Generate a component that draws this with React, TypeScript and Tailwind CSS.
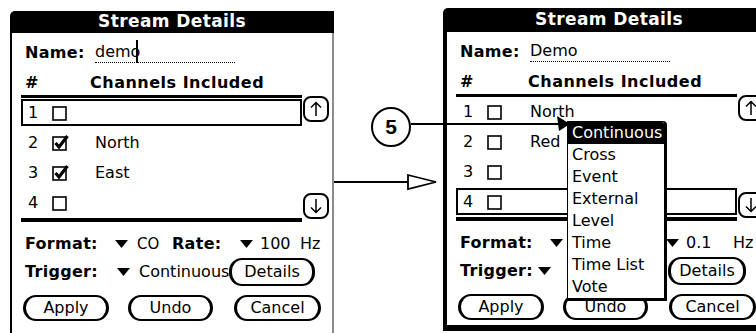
import React from 'react';

const FONT = "font-['DejaVu_Sans',sans-serif]";

type Row = { n: number; checked?: boolean; label?: string };

interface ScreenProps {
  variant: 'left' | 'right';
  name: string;
  rows: Row[];
  selected: number;
  format: string;
  rateLabel: string;
  rate: string;
  trigger: string;
  children?: React.ReactNode;
}

const Tri = () => (
  <svg width="13" height="8" viewBox="0 0 13 8" className="shrink-0">
    <path d="M0 0H13L6.5 8Z" fill="#000" />
  </svg>
);

const CheckBox = ({ checked }: { checked?: boolean }) => (
  <svg width="18" height="18" viewBox="0 0 18 18" className="shrink-0">
    <rect x="1" y="3" width="13" height="13" fill="#fff" stroke="#000" strokeWidth="1.6" />
    {checked && <path d="M3.5 9L7 13L15.5 2" fill="none" stroke="#000" strokeWidth="3.2" />}
  </svg>
);

const ScrollBtn = ({ up }: { up?: boolean }) => (
  <div className="w-[26px] h-[26px] rounded-[8px] border-2 border-black flex items-center justify-center bg-white">
    <svg width="12" height="16" viewBox="0 0 12 16">
      <path
        d={up ? 'M6 15V1.5M1 6.5L6 1.5L11 6.5' : 'M6 1V14.5M1 9.5L6 14.5L11 9.5'}
        fill="none"
        stroke="#000"
        strokeWidth="1.5"
      />
    </svg>
  </div>
);

const PalmBtn = ({ children, className }: { children: React.ReactNode; className: string }) => (
  <div
    className={`shrink-0 rounded-[13px] border-y-2 border-x-[3px] border-black flex items-center justify-center text-[16px] leading-none bg-white ${className}`}
  >
    {children}
  </div>
);

function Screen({ variant, name, rows, selected, format, rateLabel, rate, trigger, children }: ScreenProps) {
  const left = variant === 'left';
  return (
    <div className={`relative flex flex-col shrink-0 ${left ? 'w-[324px] mt-[3px] self-stretch' : 'w-[332px]'}`}>
      {/* title bar */}
      <div
        className={`bg-black text-white font-bold text-[17px] tracking-[0.4px] flex items-center justify-center rounded-tl-[5px] ${
          left ? 'h-[22px]' : 'h-[24px] rounded-tr-[5px]'
        }`}
      >
        Stream Details
      </div>

      <div
        className={`pl-[9px] text-[16px] ${
          left
            ? 'flex-1 border-l-2 border-r-2 border-l-black border-r-[#8c8c8c]'
            : 'border-l-[4px] border-b-[6px] border-black pb-[5px]'
        }`}
      >
        {/* name */}
        <div className="flex items-end h-[23px] mt-[7px] pl-[4px]">
          <span className="font-bold w-[70px] tracking-[0.3px] leading-[20px]">Name:</span>
          <span className="flex items-end w-[140px] border-b border-dotted border-black leading-[20px]">
            <span>{name}</span>
            {left && <span className="w-[2px] h-[23px] bg-black -ml-[4px] -mb-[1px]" />}
          </span>
        </div>

        {/* header */}
        <div className="flex items-center h-[20px] mt-[10px] pl-[4px] font-bold tracking-[0.5px]">
          <span className={left ? 'w-[65px]' : 'w-[68px]'}>#</span>
          <span>Channels Included</span>
        </div>

        {/* channel list */}
        <div className="flex mt-[2px]">
          <div className="w-[281px]">
            <div className="h-[3px] bg-black" />
            {rows.map((r, i) => (
              <div key={r.n} className="h-[30px] pt-[1px]">
                <div
                  className={`h-[27px] border-2 flex items-center pl-[5px] ${
                    i === selected ? 'border-black' : 'border-transparent'
                  }`}
                >
                  <span className="w-[24px]">{r.n}</span>
                  <CheckBox checked={r.checked} />
                  <span className="ml-[25px]">{r.label}</span>
                </div>
              </div>
            ))}
            <div className="h-[4px] bg-black" />
          </div>
          <div className="ml-[1px] pt-[1px] pb-[3px] flex flex-col justify-between">
            <ScrollBtn up />
            <ScrollBtn />
          </div>
        </div>

        {/* format / rate */}
        <div className="flex items-center h-[24px] mt-[10px] pl-[4px]">
          <span className="font-bold w-[90px] tracking-[0.3px]">Format:</span>
          <Tri />
          <span className="ml-[9px] w-[35px] text-[15px]">{format}</span>
          <span className={`font-bold tracking-[0.3px] ${left ? 'w-[68px]' : 'w-[59px]'}`}>{rateLabel}</span>
          <Tri />
          <span className={`ml-[7px] ${left ? 'w-[40px]' : 'w-[47px]'}`}>{rate}</span>
          <span>Hz</span>
        </div>

        {/* trigger */}
        <div className="flex items-center h-[28px] mt-[2px] pl-[4px]">
          <span className={`font-bold tracking-[0.3px] ${left ? 'w-[92px]' : 'w-[78px]'}`}>Trigger:</span>
          <Tri />
          <span className={`ml-[9px] ${left ? 'w-[90px]' : 'w-[108px]'}`}>{trigger}</span>
          <PalmBtn className={`h-[28px] ${left ? 'w-[86px]' : 'w-[78px]'}`}>Details</PalmBtn>
        </div>

        {/* buttons */}
        <div className="flex items-center mt-[9px] pl-[2px]">
          <PalmBtn className="h-[26px] w-[86px]">Apply</PalmBtn>
          <PalmBtn className="h-[26px] w-[85px] ml-[19px]">Undo</PalmBtn>
          <PalmBtn className="h-[26px] w-[87px] ml-[21px]">Cancel</PalmBtn>
        </div>
      </div>
      {children}
    </div>
  );
}

const TRIGGERS = ['Continuous', 'Cross', 'Event', 'External', 'Level', 'Time', 'Time List', 'Vote'];

export default function App() {
  return (
    <div
      className={`relative w-[756px] h-[333px] overflow-hidden bg-white text-black flex items-start pt-[8px] pl-[10px] ${FONT}`}
    >
      <Screen
        variant="left"
        name="demo"
        rows={[
          { n: 1 },
          { n: 2, checked: true, label: 'North' },
          { n: 3, checked: true, label: 'East' },
          { n: 4 },
        ]}
        selected={0}
        format="CO"
        rateLabel="Rate:"
        rate="100"
        trigger="Continuous"
      />

      {/* transition arrow */}
      <div className="w-[109px] shrink-0 mt-[166px]">
        <svg width="109" height="18" viewBox="0 0 109 18">
          <path d="M0 8H75" stroke="#000" strokeWidth="2" />
          <path d="M74 1L102 8L74 15Z" fill="#fff" stroke="#000" strokeWidth="1.8" strokeLinejoin="miter" />
        </svg>
      </div>

      {/* values hidden under the open popup are left empty */}
      <Screen
        variant="right"
        name="Demo"
        rows={[{ n: 1, label: 'North' }, { n: 2, label: 'Red' }, { n: 3 }, { n: 4 }]}
        selected={3}
        format=""
        rateLabel=""
        rate="0.1"
        trigger=""
      >
        {/* trigger popup list */}
        <div className="absolute left-[124px] top-[113px] w-[100px] bg-white border-l-[1.5px] border-t-[1.5px] border-r-[3px] border-b-[3px] border-black rounded-tr-[4px] text-[16px]">
          {TRIGGERS.map((t, i) => (
            <div
              key={t}
              className={`h-[22px] leading-[22px] pl-[4px] ${i === 0 ? 'bg-black text-white rounded-tr-[2px]' : ''}`}
            >
              {t}
            </div>
          ))}
        </div>
      </Screen>

      {/* callout 5 */}
      <div className="absolute left-[371px] top-[107px] w-[40px] h-[40px] rounded-full border-2 border-black bg-white flex items-center justify-center font-bold text-[21px] font-['Liberation_Sans',sans-serif]">
        5
      </div>
      <div className="absolute left-[411px] top-[123px] w-[148px] h-[2px] bg-black" />
      <svg className="absolute left-[555px] top-[115px]" width="16" height="18" viewBox="0 0 16 18">
        <path d="M2 1L15 9L4 16Z" fill="#000" />
      </svg>
    </div>
  );
}
